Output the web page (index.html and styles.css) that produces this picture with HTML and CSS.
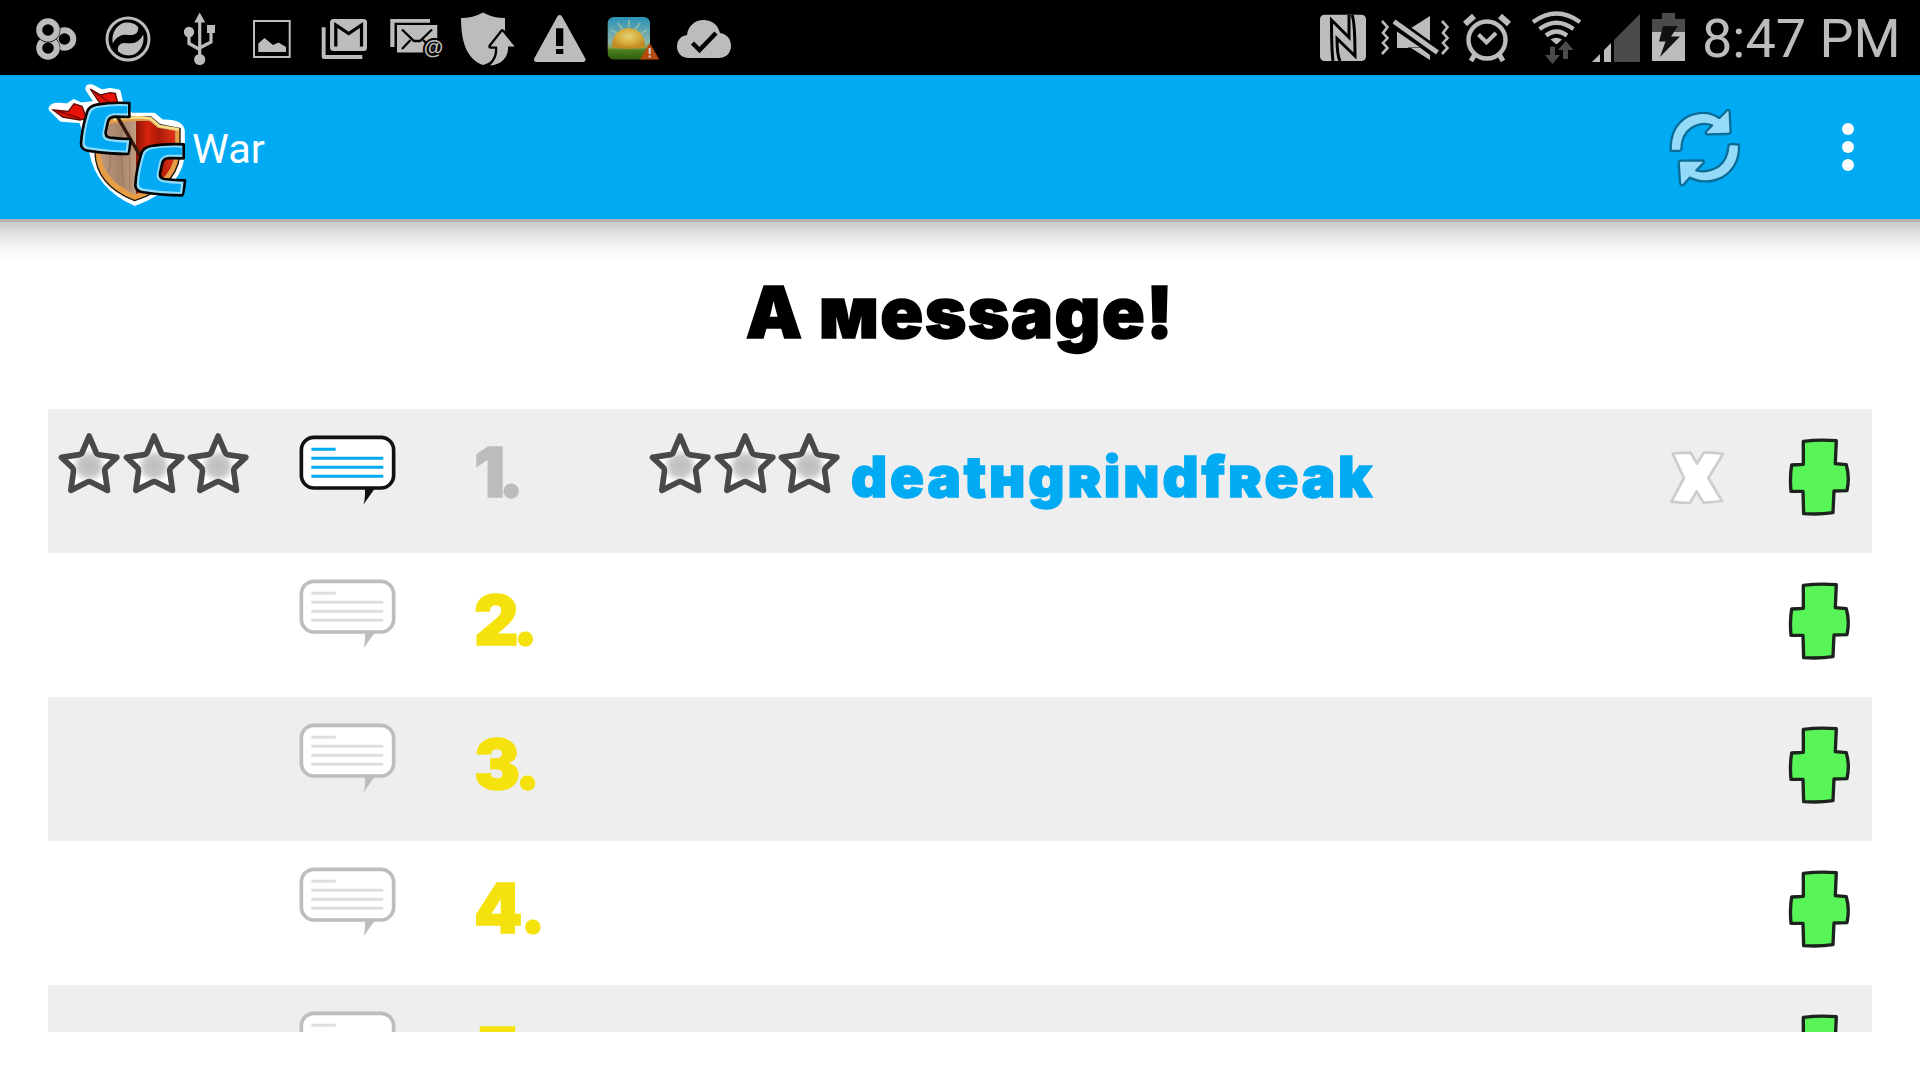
FILE: index.html
```html
<!DOCTYPE html>
<html lang="en">
<head>
<meta charset="utf-8">
<title>War</title>
<link rel="stylesheet" href="styles.css">
</head>
<body>
<svg class="defs" aria-hidden="true">
  <defs>
    <radialGradient id="starFill" cx="50%" cy="55%" r="42%"><stop offset="0" stop-color="#bdbdbd"/><stop offset=".4" stop-color="#c8c8c8"/><stop offset=".75" stop-color="#fff"/></radialGradient>
    <linearGradient id="wood" x1="0" x2="1"><stop offset="0" stop-color="#bd9a80"/><stop offset=".25" stop-color="#a5846c"/><stop offset=".5" stop-color="#c4a184"/><stop offset=".8" stop-color="#9d7a61"/><stop offset="1" stop-color="#b18d70"/></linearGradient>
    <linearGradient id="red" x1="0" x2="1"><stop offset="0" stop-color="#8e1507"/><stop offset=".3" stop-color="#d8230d"/><stop offset=".6" stop-color="#a91a09"/><stop offset="1" stop-color="#e33216"/></linearGradient>
    <linearGradient id="sky" x1="0" y1="0" x2="0" y2="1"><stop offset="0" stop-color="#2a93b8"/><stop offset=".6" stop-color="#8fb5ab"/><stop offset=".72" stop-color="#86a04a"/><stop offset=".78" stop-color="#4d8020"/><stop offset="1" stop-color="#2e5d10"/></linearGradient>
    <radialGradient id="sun" cx="50%" cy="40%" r="55%"><stop offset="0" stop-color="#e3cf78"/><stop offset=".6" stop-color="#d9ae3c"/><stop offset="1" stop-color="#c48a22"/></radialGradient>
    <symbol id="star" viewBox="52 90 192 200"><path d="M148 108L169 158Q171 163 177 164L231 172L199 202Q194 207 195 214L203 271L153 246Q148 243 143 246L93 271L101 214Q102 207 97 202L65 172L119 164Q125 163 127 158Z" fill="url(#starFill)" stroke="#494949" stroke-width="17" stroke-linejoin="round"/></symbol>
    <symbol id="bubble" viewBox="770 100 300 220">
      <path d="M974 266H1004L969 315Q975 300 974 266Z" fill="currentColor" stroke="none"/>
      <rect x="783" y="113" width="277" height="152" rx="38" fill="#fff" stroke="currentColor" stroke-width="11"/>
      <path d="M813 148.500H886M813 175.500H1029M813 202.500H1029M813 229.500H1029" stroke-width="9" fill="none"/>
    </symbol>
    <symbol id="plus" viewBox="430 100 220 260"><path d="M491 125Q540 119 590 123L587 192L620 195Q631 233 622 273L583 274L580 339Q540 345 492 342L490 275L454 275Q450 233 456 196L491 194Z" fill="#58f458" stroke="#1c221c" stroke-width="10" stroke-linejoin="round"/></symbol>
    <symbol id="remove" viewBox="80 140 180 180"><path d="M97 160Q125 157 151 157L170 190L190 157Q220 156 248 161L204 233L245 302Q220 306 189 307L169 273L149 308Q120 308 93 304L131 233Z" fill="#fff" stroke="#cdcdcd" stroke-width="8" stroke-linejoin="round"/></symbol>
  </defs>
</svg>

<div class="status">
  <svg class="slot" viewBox="0 0 72 75" fill="none" stroke="#bcbcbc" stroke-width="6"><circle cx="44.500" cy="39" r="8.800"/><circle cx="28" cy="48" r="12.300" fill="#000" stroke="none"/><circle cx="28" cy="48" r="8.800"/><circle cx="28" cy="30" r="12.400" fill="#000" stroke="none"/><circle cx="28" cy="30" r="8.800"/></svg>
  <svg class="slot" viewBox="0 0 72 75"><circle cx="36" cy="39" r="21" fill="none" stroke="#bcbcbc" stroke-width="3"/><path d="M20.800 43.500C19.500 36 22 28 29 24C35 21 43 23 46 27C47 31 44 35.500 39 35C34 34.500 26 33 20.800 43.500Z" fill="#bcbcbc"/><path d="M51.200 34.500C52.500 42 50 50 43 54C37 57 29 55 26 51C25 47 28 42.500 33 43C38 43.500 46 45 51.200 34.500Z" fill="#bcbcbc"/></svg>
  <svg class="slot" viewBox="0 0 72 75" fill="#bcbcbc"><path d="M35.700 12.500L41.200 22.500H30.200Z"/><circle cx="35.700" cy="59.500" r="5.600"/><circle cx="25" cy="32" r="5.200"/><rect x="43" y="25" width="8" height="8"/><path d="M35.700 20V56M25 32V43.500L35.700 49.500M47 30V42L35.700 48" fill="none" stroke="#bcbcbc" stroke-width="3.200"/></svg>
  <svg class="slot" viewBox="0 0 72 75"><rect x="18" y="21" width="35.700" height="36" fill="none" stroke="#bcbcbc" stroke-width="2"/><path d="M22.300 52V43.500L28.500 38L37 45L42.500 42.500L50 47V52Z" fill="#bcbcbc"/></svg>
  <svg class="slot" viewBox="0 0 72 75"><path d="M13.700 27.300H17.600V55H54.300V59H16Q13.700 59 13.700 56.500Z" fill="#bcbcbc"/><rect x="22" y="19" width="37" height="32" rx="3.500" fill="#bcbcbc"/><path d="M27.800 46.500V25L40.700 33.500L53.500 25V46.500" fill="none" stroke="#000" stroke-width="3.200"/></svg>
  <svg class="slot" viewBox="0 0 72 75"><path d="M10.300 19H50V22.700H14.500V47H10.300Z" fill="#bcbcbc"/><rect x="17" y="25" width="40.300" height="27.500" fill="#bcbcbc"/><path d="M22 29.500L34 41H40L52 29.500M22 49L30.500 40M43 40L47 44" fill="none" stroke="#000" stroke-width="2.300"/><text x="53.500" y="53.500" text-anchor="middle" class="at">@</text></svg>
  <svg class="slot" viewBox="0 0 72 75"><path d="M9 18Q21 18 31 12.500Q41 18 53 18V30C53 49 44 61 31 65C17 60 9 46 9 18Z" fill="#bcbcbc"/><path d="M50.300 31.500L62.700 46.500H56C57 56 50 65 38 65.500C44 60 46 54 45 46.500H38.500Z" fill="#bcbcbc" stroke="#000" stroke-width="4.500" paint-order="stroke" stroke-linejoin="round"/></svg>
  <svg class="slot" viewBox="0 0 72 75"><path d="M35.700 17.500L59 59.500H12.500Z" fill="#bcbcbc" stroke="#bcbcbc" stroke-width="5" stroke-linejoin="round"/><path d="M32 28.300H39.300V46H32ZM32 49H39.300V54H32Z"/></svg>
  <svg class="slot" viewBox="0 0 72 75"><rect x="11.700" y="17" width="42.300" height="42.500" rx="6" fill="url(#sky)"/><path d="M33 20V27M22 23L27 30M44 23L39 30M15 30L22 34M51 30L44 34" stroke="#b5c9a8" stroke-width="2" opacity=".6"/><path d="M16.500 47.500A16.300 16.300 0 1 1 48.500 47.500Q32 50 16.500 47.500Z" fill="url(#sun)"/><path d="M53.700 43L63.300 59.500H44Z" fill="#b64a0b"/><path d="M53.700 48V54M53.700 55.500V57.500" stroke="#ccc" stroke-width="2.200"/></svg>
  <svg class="slot" viewBox="0 0 72 75"><path d="M21 58C13 58 9 52.500 9 46.500C9 40 13 36 19 35C20 26 27 20 35.500 20C44 20 50 25 52 33C59 34 63 39 63 46C63 53 58 58 51 58Z" fill="#bcbcbc"/><path d="M24.500 43L31.500 50L48 33" fill="none" stroke="#000" stroke-width="4.500"/></svg>

  <div class="status-right">
    <svg width="68" height="75" viewBox="1308 0 68 75"><rect x="1320" y="14.700" width="46" height="46.300" rx="4.500" fill="#bcbcbc"/><path d="M1333 61Q1331.500 50 1331.500 20L1349 37.500V15M1352 15Q1355 22 1355 56L1337 38.500Q1337 55 1340 61" fill="none" stroke="#000" stroke-width="3"/></svg>
    <svg width="80" height="75" viewBox="1376 0 80 75"><path d="M1397 31.500L1421 48H1397ZM1411 28L1430 16V41ZM1408 48H1411L1430 60V55L1420 47.500H1408Z" fill="#bcbcbc"/><path d="M1393 20L1440 54" stroke="#000" stroke-width="9"/><path d="M1394 21.500L1437.500 52.500" stroke="#bcbcbc" stroke-width="4.800"/><path d="M1382 21L1387.500 27L1383 33L1387.500 38L1383 43L1387.500 48L1382 54M1442 21L1447.500 27L1443 33L1447.500 38L1443 43L1447.500 48L1442 54" fill="none" stroke="#bcbcbc" stroke-width="2.600"/></svg>
    <svg width="66" height="75" viewBox="1456 0 66 75" fill="none" stroke="#bcbcbc"><circle cx="1487" cy="40" r="18.500" stroke-width="4.400"/><path d="M1478.500 34.500L1486.500 42.500L1496 33" stroke-width="4"/><path d="M1465 24L1474 16M1509 24L1500 16" stroke-width="6"/><path d="M1475 54L1471 61M1499 54L1503 61" stroke-width="5"/></svg>
    <svg width="68" height="75" viewBox="1522 0 68 75" fill="none" stroke="#bcbcbc" stroke-width="4.200"><path d="M1533 22Q1556.500 5 1580 22M1539.500 29Q1556.500 16.500 1573.500 29M1546 35.500Q1556.500 27.500 1567 35.500"/><path d="M1550.500 39.500Q1556 36 1562 39.500L1556.500 44.500Z" fill="#bcbcbc" stroke="none"/><path d="M1550 46.500H1555V55H1560L1552.500 64L1545 55H1550ZM1565.800 41L1573.500 50H1568V59H1563V50H1558Z" fill="#4b4b4b" stroke="none"/></svg>
    <svg width="54" height="75" viewBox="1590 0 54 75"><path d="M1592 62L1600 54V62ZM1604 50L1611 43V62H1604Z" fill="#bcbcbc"/><path d="M1614 40L1640 14V62H1614Z" fill="#4b4b4b"/></svg>
    <svg width="56" height="75" viewBox="1644 0 56 75"><path d="M1662 13H1675V19H1685V33H1652V19H1662Z" fill="#4b4b4b"/><path d="M1652 32H1685V61H1652Z" fill="#bcbcbc"/><path d="M1663 26H1678L1671 36.500H1680L1660 57L1665.500 41.500H1659Z" fill="#111"/></svg>
    <span class="time">8:47 PM</span>
  </div>
</div>

<header class="bar">
  <svg class="logo" viewBox="0 15 480 432">
    <path d="M63 116Q66 105 88 106L112 108L132 95L153 105L202 100L174 58Q172 47 186 51L215 66L240 61L265 66L272 98L302 135L372 136L395 156Q452 153 457 182V240Q460 345 314 400Q205 350 186 250L154 152L94 148Z" fill="#fff" stroke="#fff" stroke-width="15" stroke-linejoin="round"/>
    <path d="M205 150Q290 136 362 141L390 164L450 176V225Q458 345 314 392Q196 345 195 245Z" fill="#e79d45" stroke="#23160d" stroke-width="4"/>
    <path d="M214 166Q300 150 358 152L384 173L437 182V225Q440 330 314 374Q212 325 211 240Z" fill="url(#wood)"/>
    <path d="M318 153L358 153L384 174L435 183V230Q438 330 318 372Z" fill="url(#red)"/>
    <path d="M250 148Q320 138 361 145L388 168L447 178" fill="none" stroke="#f6df8b" stroke-width="8"/>
    <path d="M240 200Q246 260 235 310M275 180Q270 260 282 350M298 180L300 360" fill="none" stroke="#80604a" stroke-width="3" opacity=".5"/>
    <path d="M262 140L335 265" stroke="#35190f" stroke-width="10"/>
    <path d="M181 57L212 75L240 68L256 70L263 98L212 103ZM70 120L115 124L132 101L156 109L170 145L150 150L98 141Z" fill="#e71306" stroke="#5b0a05" stroke-width="4"/>
    <path d="M190 65L240 98M80 122L150 145" stroke="#8b0804" stroke-width="5"/>
    <g id="hook" stroke-linejoin="round">
      <path d="M298 99Q245 96 200 104Q175 108 170 130Q155 180 153 222Q154 238 172 242Q235 252 294 252Q298 250 302 207Q270 207 240 203Q225 200 227 186L234 154Q238 141 255 140L298 141Z" fill="#8fdbfb" stroke="#050505" stroke-width="8"/>
      <path d="M292 109Q245 106 204 113Q184 116 179 136Q165 182 164 218Q165 229 178 232Q235 241 287 242L290 218Q260 218 232 212Q215 207 217 188L225 150Q231 132 252 130L292 130Z" fill="#03a9f3"/>
    </g>
    <use href="#hook" x="163" y="124"/>
  </svg>
  <h1 class="title">War</h1>
  <svg class="refresh" viewBox="0 -45 330 432"><path d="M92 182Q90 110 142 80Q195 55 238 84L262 60Q268 58 269 66L272 126Q271 132 262 132L202 133Q193 131 200 123L216 106Q185 94 153 115Q124 135 124 179Q122 184 115 183ZM297 164Q300 230 247 262Q195 286 149 263L130 285Q122 289 120 278L116 218Q117 212 126 212L186 211Q195 213 190 220L169 241Q205 250 236 229Q264 207 265 168Q268 161 275 162Z" fill="#95daf8" stroke="#0b6c96" stroke-width="7" stroke-linejoin="round"/></svg>
  <svg class="more" viewBox="0 0 144 144" fill="#fff"><circle cx="72" cy="54" r="6"/><circle cx="72" cy="72" r="6"/><circle cx="72" cy="90" r="6"/></svg>
</header>

<main>
  <p class="message">A <span class="sc">m</span>essage!</p>
  <div class="list">
    <div class="row first">
      <div class="stars mine"><svg><use href="#star"/></svg><svg><use href="#star"/></svg><svg><use href="#star"/></svg></div>
      <svg class="bubble"><use href="#bubble"/></svg>
      <span class="num one">1.</span>
      <div class="stars"><svg><use href="#star"/></svg><svg><use href="#star"/></svg><svg><use href="#star"/></svg></div>
      <span class="name">deat<span class="sc">h</span>g<span class="sc">r</span>i<span class="sc">n</span>df<span class="sc">r</span>eak</span>
      <svg class="remove"><use href="#remove"/></svg>
      <svg class="plus"><use href="#plus"/></svg>
    </div>
    <div class="row"><svg class="bubble"><use href="#bubble"/></svg><span class="num two">2.</span><svg class="plus"><use href="#plus"/></svg></div>
    <div class="row"><svg class="bubble"><use href="#bubble"/></svg><span class="num three">3.</span><svg class="plus"><use href="#plus"/></svg></div>
    <div class="row"><svg class="bubble"><use href="#bubble"/></svg><span class="num">4.</span><svg class="plus"><use href="#plus"/></svg></div>
    <div class="row"><svg class="bubble"><use href="#bubble"/></svg><span class="num">5.</span><svg class="plus"><use href="#plus"/></svg></div>
  </div>
</main>
</body>
</html>
```
FILE: styles.css
```css
* { box-sizing: border-box; }
body {
  margin: 0;
  height: 1080px;
  overflow: hidden;
  background: #fff;
  font-family: Roboto, "Liberation Sans", sans-serif;
}
svg { display: block; flex: none; }
.defs { width: 0; height: 0; position: absolute; }

.status { height: 75px; padding-left: 20px; display: flex; background: #000; }
.slot { width: 72px; height: 75px; }
.at { font: bold 20px "Liberation Sans", sans-serif; fill: #bcbcbc; stroke: #000; stroke-width: 4px; paint-order: stroke; }
.status-right { flex: 1; display: flex; justify-content: flex-start; margin-left: 568px; }
.time { margin-left: 2px; font-size: 54px; line-height: 77px; color: #bcbcbc; white-space: nowrap; }

.bar { position: relative; height: 144px; padding-left: 30px; display: flex; background: #00abf3; }
.bar::after {
  content: "";
  position: absolute;
  left: 0;
  right: 0;
  top: 144px;
  height: 42px;
  background: linear-gradient(#b3b1b1 0 3px, #c9c9c9 3px, #e0e0e0 14px, #f4f4f4 27px, #fff 42px);
}
.logo { width: 160px; height: 144px; }
.title { margin: 0 auto 0 2px; font-size: 41.500px; font-weight: 400; line-height: 147px; color: #fff; }
.refresh { width: 110px; height: 144px; margin-right: 26px; }
.more { width: 144px; height: 144px; }

.message, .num, .name {
  margin: 0;
  font-family: Inter, "Open Sans", sans-serif;
  font-weight: 900;
  white-space: nowrap;
  -webkit-text-stroke: 1.500px currentColor;
}
.sc { font-variant-caps: small-caps; }
.message { height: 190px; font-size: 71px; line-height: 186px; letter-spacing: 1.300px; text-align: center; color: #000; }

.list { height: 623px; margin: 0 48px; overflow: hidden; }
.row {
  height: 144px;
  display: grid;
  grid-template-columns: 248.700px 179.300px 172.300px 202.700px 1fr 116.600px 88.700px;
  align-items: start;
}
.row:nth-child(odd) { background: #eee; }
.stars { grid-column: 4; display: flex; padding-top: 21px; }
.stars.mine { grid-column: 1; padding-left: 9.300px; }
.stars svg { width: 64.300px; height: 66.700px; }
.bubble { grid-column: 2; width: 100px; height: 73.300px; margin-top: 24.300px; color: #bdbdbd; stroke: #dedede; }
.first .bubble { color: #111; stroke: #00abf3; }
.num { grid-column: 3; margin-left: -2px; font-size: 69px; line-height: 135px; color: #f5e20d; }
.num.one { line-height: 127px; letter-spacing: -7px; color: #bcbcbc; }
.num.two { letter-spacing: -6px; }
.num.three { letter-spacing: -4px; }
.name { grid-column: 5; font-size: 56px; line-height: 136px; letter-spacing: 2.900px; color: #00abf3; }
.remove { grid-column: 6; width: 60px; height: 60px; margin-top: 37.700px; }
.plus { grid-column: 7; width: 73.300px; height: 86.700px; margin-top: 24.300px; }
```
